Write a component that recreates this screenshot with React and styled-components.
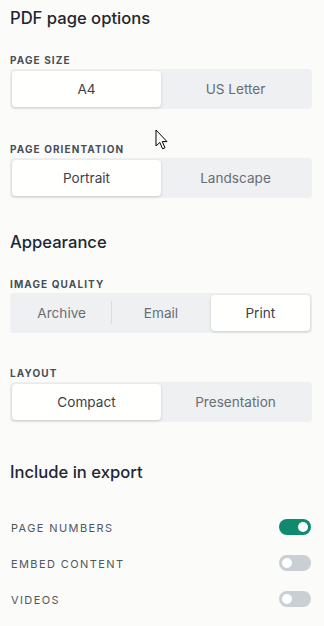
import styled, { createGlobalStyle } from "styled-components";

const Global = createGlobalStyle`
  html, body {
    margin: 0;
    padding: 0;
    background: #fbfbf9;
  }
  body {
    font-family: Inter, "Open Sans", sans-serif;
    -webkit-font-smoothing: antialiased;
  }
`;

const Panel = styled.div`
  position: relative;
  width: 324px;
  height: 626px;
  box-sizing: border-box;
  padding: 8px 12px 0 10px;
  overflow: hidden;
`;

const Heading = styled.h2`
  margin: ${(p) => p.$top || 0}px 0 0;
  font-size: 16.6px;
  line-height: 20px;
  font-weight: 500;
  color: #1e2733;
`;

const Label = styled.div`
  margin-top: ${(p) => p.$top || 0}px;
  font-size: 10px;
  line-height: 12px;
  font-weight: 700;
  letter-spacing: 1.1px;
  color: #474e57;
  text-transform: uppercase;
`;

const Segments = styled.div`
  margin-top: 3px;
  display: flex;
  height: 40px;
  box-sizing: border-box;
  padding: 2px;
  border-radius: 4px;
  background: #eef0f1;
`;

const Segment = styled.button`
  position: relative;
  flex: 1;
  border: 0;
  border-radius: 4px;
  font-family: inherit;
  font-size: 13.6px;
  background: ${(p) => (p.$active ? "#fffffe" : "transparent")};
  color: ${(p) => (p.$active ? "#3b4148" : "#686e75")};
  box-shadow: ${(p) =>
    p.$active ? "0 1px 3px rgba(30, 40, 50, 0.18)" : "none"};
  padding: 0;
  cursor: pointer;

  &::before {
    content: "";
    display: ${(p) => (p.$divider ? "block" : "none")};
    position: absolute;
    left: 0;
    top: 6px;
    bottom: 7px;
    width: 1px;
    background: #d9dddf;
  }
`;

const Rows = styled.div`
  margin-top: 27px;
`;

const Row = styled.div`
  display: flex;
  align-items: center;
  justify-content: space-between;
  height: 36px;
  padding-right: 1px;
`;

const RowLabel = styled.span`
  font-size: 11px;
  letter-spacing: 1.4px;
  color: #51575f;
  padding: 2px 0 0 1px;
  text-transform: uppercase;
`;

const Toggle = styled.span`
  position: relative;
  width: 32px;
  height: 16px;
  border-radius: 8px;
  background: ${(p) => (p.$on ? "#0f8a6e" : "#c9cfd3")};

  &::after {
    content: "";
    position: absolute;
    top: 3px;
    left: ${(p) => (p.$on ? "19px" : "3px")};
    width: 10px;
    height: 10px;
    border-radius: 50%;
    background: #ffffff;
  }
`;

const Cursor = styled.svg`
  position: absolute;
  left: 155px;
  top: 129px;
`;

const SegmentGroup = ({ options, active }) => (
  <Segments>
    {options.map((o, i) => (
      <Segment
        key={o}
        $active={i === active}
        $divider={i > 0 && i !== active && i - 1 !== active}
      >
        {o}
      </Segment>
    ))}
  </Segments>
);

export default function App() {
  return (
    <Panel>
      <Global />
      <Heading>PDF page options</Heading>

      <Label $top={26}>Page size</Label>
      <SegmentGroup options={["A4", "US Letter"]} active={0} />

      <Label $top={34}>Page orientation</Label>
      <SegmentGroup options={["Portrait", "Landscape"]} active={0} />

      <Heading $top={34}>Appearance</Heading>

      <Label $top={26}>Image quality</Label>
      <SegmentGroup options={["Archive", "Email", "Print"]} active={2} />

      <Label $top={34}>Layout</Label>
      <SegmentGroup options={["Compact", "Presentation"]} active={0} />

      <Heading $top={40}>Include in export</Heading>

      <Rows>
        <Row>
          <RowLabel>Page numbers</RowLabel>
          <Toggle $on />
        </Row>
        <Row>
          <RowLabel>Embed content</RowLabel>
          <Toggle />
        </Row>
        <Row>
          <RowLabel>Videos</RowLabel>
          <Toggle />
        </Row>
      </Rows>

      <Cursor width="13" height="22" viewBox="0 0 13 22">
        <path
          d="M1 1 L1 17 L4.8 13.4 L7.6 19.8 L10 18.8 L7.3 12.6 L12 12.6 Z"
          fill="#fff"
          stroke="#000"
          strokeWidth="1"
          strokeLinejoin="miter"
        />
      </Cursor>
    </Panel>
  );
}
